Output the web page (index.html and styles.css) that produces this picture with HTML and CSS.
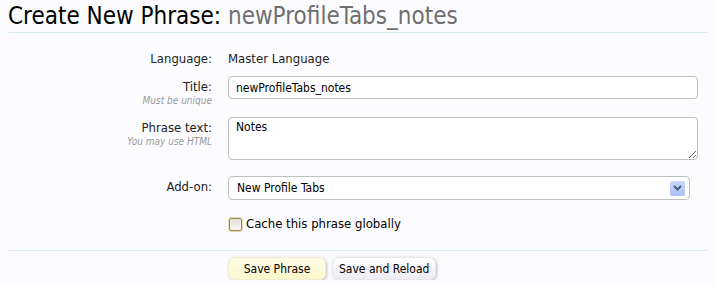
FILE: index.html
```html
<!DOCTYPE html>
<html lang="en">

<head>
    <meta charset="UTF-8">
    <title>Create New Phrase</title>
    <link rel="stylesheet" href="styles.css">
</head>

<body>
    <h1 class="title-bar">Create New Phrase: <span class="phrase-name">newProfileTabs_notes</span></h1>

    <form class="phrase-form">
        <!-- Language -->
        <div class="ctrl-row first">
            <div class="ctrl-label flat">Language:</div>
            <div class="ctrl-unit plain">Master Language</div>
        </div>

        <!-- Title -->
        <div class="ctrl-row">
            <div class="ctrl-label">Title:<span class="hint">Must be unique</span></div>
            <div class="ctrl-unit"><input type="text" class="text-ctrl" value="newProfileTabs_notes"></div>
        </div>

        <!-- Phrase text -->
        <div class="ctrl-row tall">
            <div class="ctrl-label">Phrase text:<span class="hint">You may use HTML</span></div>
            <div class="ctrl-unit"><textarea class="text-ctrl area">Notes</textarea></div>
        </div>

        <!-- Add-on -->
        <div class="ctrl-row">
            <div class="ctrl-label">Add-on:</div>
            <div class="ctrl-unit">
                <div class="select-ctrl">
                    <span>New Profile Tabs</span>
                    <span class="select-arrow">
                        <svg width="9" height="6" viewBox="0 0 9 6"><path d="M1 1 L4.5 4.5 L8 1" fill="none" stroke="#4d5a75" stroke-width="2"/></svg>
                    </span>
                </div>
            </div>
        </div>

        <div class="ctrl-row">
            <div class="ctrl-label"></div>
            <label class="ctrl-unit check-line"><span class="check-box"></span>Cache this phrase globally</label>
        </div>

        <div class="submit-row">
            <button type="button" class="btn primary">Save Phrase</button>
            <button type="button" class="btn">Save and Reload</button>
        </div>
    </form>
</body>

</html>
```

FILE: styles.css
```css
/* Page */
body {
    margin: 0;
    padding: 0 8px;
    background: #fcfcff;
    color: #000000;
    font-family: 'DejaVu Sans Condensed', 'DejaVu Sans', sans-serif;
    font-size: 12px;
}

/* Heading */
.title-bar {
    margin: 0;
    padding: 3px 0 3px;
    font-size: 24px;
    font-weight: normal;
    line-height: 26px;
    border-bottom: 1px solid #d7edf0;
}

.title-bar .phrase-name {
    color: #6f6f6f;
}

/* Form rows */
.phrase-form {
    padding-top: 16px;
}

.ctrl-row {
    display: flex;
    margin-bottom: 11px;
}

.ctrl-row.first {
    padding-top: 2px;
    margin-bottom: 9px;
}

.ctrl-row.tall {
    margin-bottom: 16px;
}

.ctrl-label {
    width: 204px;
    padding: 3px 16px 0 0;
    text-align: right;
    font-size: 13px;
    line-height: 16px;
    color: #222222;
}

.ctrl-label.flat {
    padding-top: 0;
}

.ctrl-label .hint {
    display: block;
    font-size: 10px;
    font-style: italic;
    line-height: 11px;
    color: #9a9a9a;
}

.ctrl-unit {
    flex: 1;
    font-size: 13px;
}

.plain {
    line-height: 16px;
    color: #222222;
}

.text-ctrl {
    box-sizing: border-box;
    width: 470px;
    height: 23px;
    padding: 2px 7px;
    border: 1px solid #c0c0c0;
    border-radius: 4px;
    background: #ffffff;
    font-family: inherit;
    font-size: 12px;
    color: #000000;
}

.text-ctrl.area {
    display: block;
    height: 43px;
    resize: vertical;
}

/* Select */
.select-ctrl {
    box-sizing: border-box;
    width: 462px;
    height: 24px;
    padding: 0 4px 0 8px;
    border: 1px solid #c0c0c0;
    border-radius: 4px;
    background: #ffffff;
    display: flex;
    align-items: center;
    justify-content: space-between;
    font-size: 12px;
}

.select-arrow {
    width: 15px;
    height: 15px;
    border-radius: 2px;
    background: linear-gradient(#c9d9fc, #a9c0f3);
    display: flex;
    align-items: center;
    justify-content: center;
}

/* Checkbox */
.check-line {
    display: flex;
    align-items: center;
    gap: 4px;
    padding-top: 5px;
    line-height: 16px;
}

.check-box {
    margin-left: 1px;
    width: 11px;
    height: 11px;
    border: 1px solid #9c8a55;
    border-radius: 2px;
    background: linear-gradient(#e2dfd6, #f8f7f3);
    box-shadow: 0 0 0 1px #e3dbb8;
}

/* Buttons */
.submit-row {
    margin-top: 18px;
    border-top: 1px solid #d7edf0;
    padding: 6px 0 0 220px;
    display: flex;
    gap: 6px;
}

.btn {
    height: 23px;
    padding: 0 6px;
    border: 1px solid #e7e7e7;
    border-radius: 7px;
    background: linear-gradient(#ffffff, #ececf2);
    box-shadow: 1px 1px 3px rgba(0, 0, 0, 0.25);
    font-family: inherit;
    font-size: 12px;
    color: #000000;
}

.btn.primary {
    width: 98px;
    border-color: #f1eed0;
    background: linear-gradient(#fffde8, #fbf8cc);
}
```
